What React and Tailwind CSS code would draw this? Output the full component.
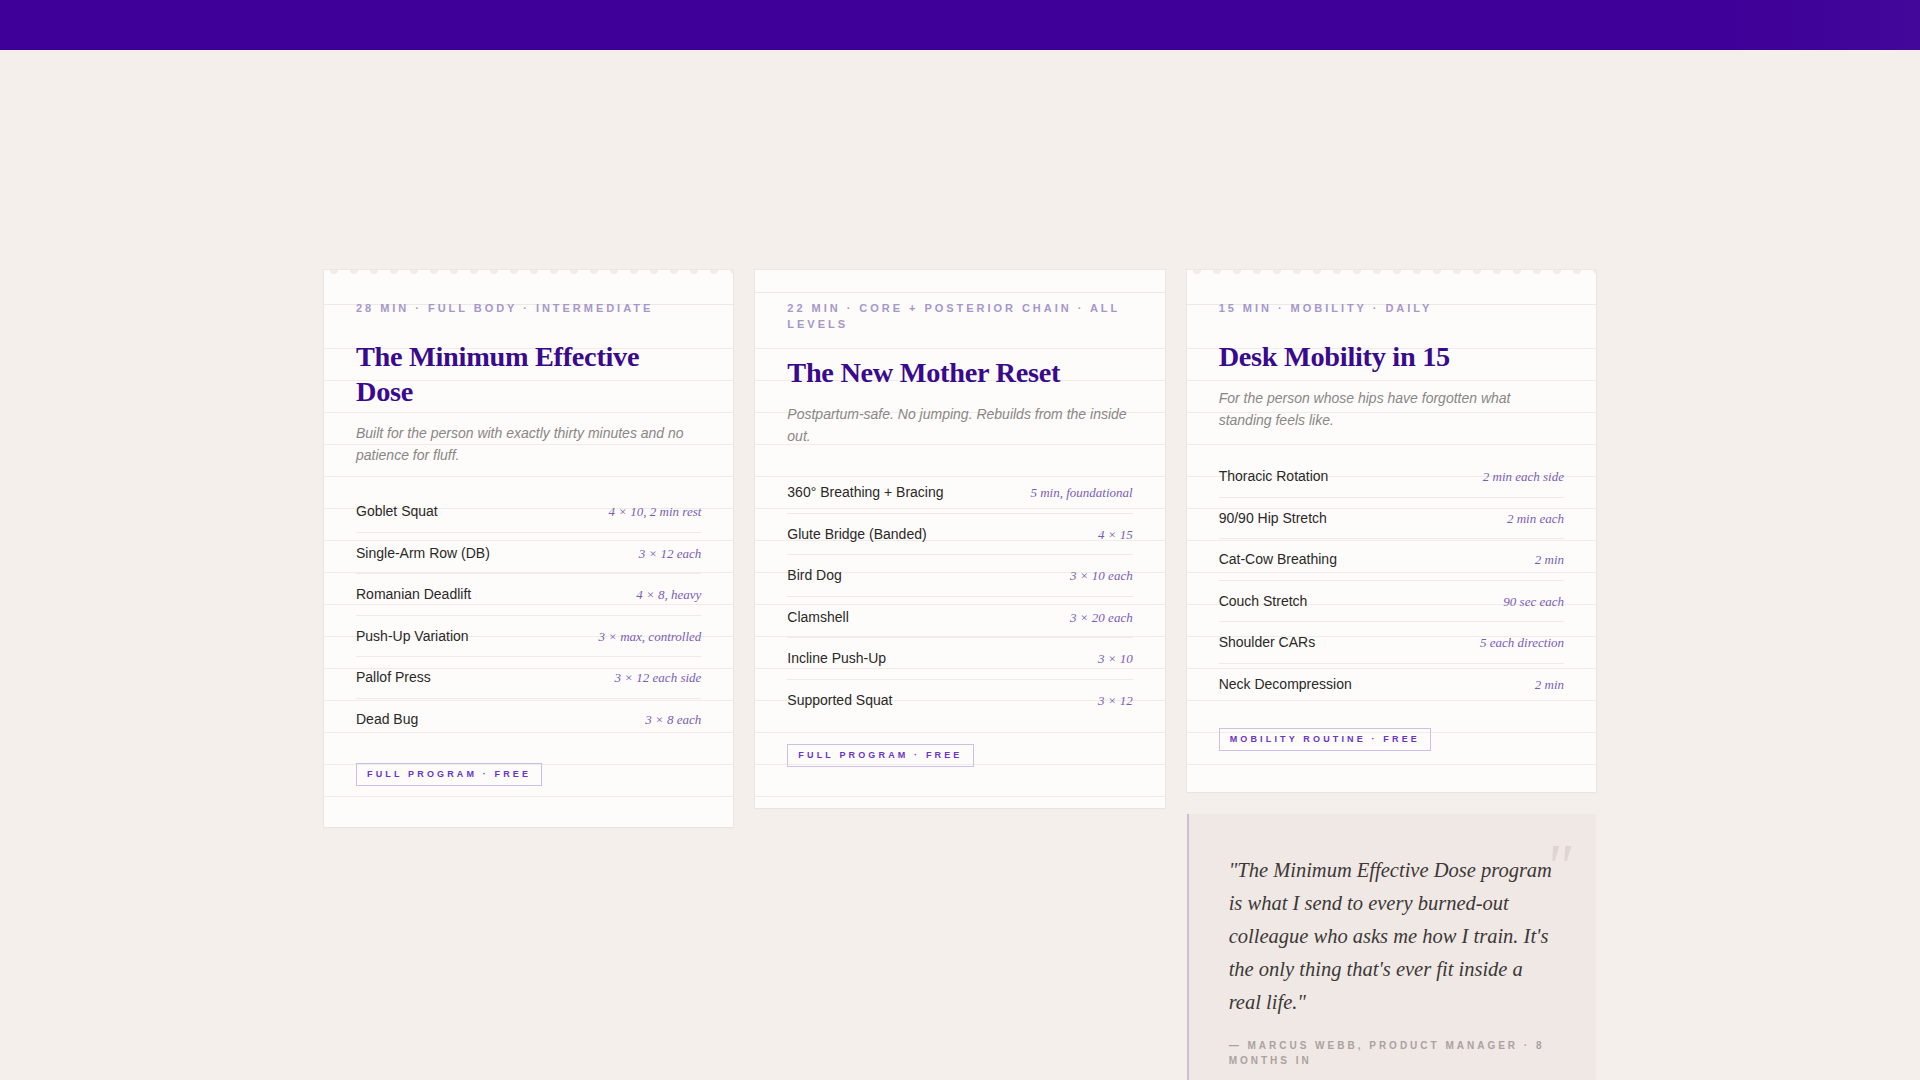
import React from 'react';

const programs = [
  {
    meta: '28 min · Full Body · Intermediate',
    title: 'The Minimum Effective Dose',
    desc: 'Built for the person with exactly thirty minutes and no patience for fluff.',
    wavy: true,
    cta: 'Full Program · Free',
    rows: [
      ['Goblet Squat', '4 × 10, 2 min rest'],
      ['Single-Arm Row (DB)', '3 × 12 each'],
      ['Romanian Deadlift', '4 × 8, heavy'],
      ['Push-Up Variation', '3 × max, controlled'],
      ['Pallof Press', '3 × 12 each side'],
      ['Dead Bug', '3 × 8 each'],
    ],
  },
  {
    meta: '22 min · Core + Posterior Chain · All Levels',
    title: 'The New Mother Reset',
    desc: 'Postpartum-safe. No jumping. Rebuilds from the inside out.',
    wavy: false,
    cta: 'Full Program · Free',
    rows: [
      ['360° Breathing + Bracing', '5 min, foundational'],
      ['Glute Bridge (Banded)', '4 × 15'],
      ['Bird Dog', '3 × 10 each'],
      ['Clamshell', '3 × 20 each'],
      ['Incline Push-Up', '3 × 10'],
      ['Supported Squat', '3 × 12'],
    ],
  },
  {
    meta: '15 min · Mobility · Daily',
    title: 'Desk Mobility in 15',
    desc: 'For the person whose hips have forgotten what standing feels like.',
    wavy: true,
    cta: 'Mobility Routine · Free',
    rows: [
      ['Thoracic Rotation', '2 min each side'],
      ['90/90 Hip Stretch', '2 min each'],
      ['Cat-Cow Breathing', '2 min'],
      ['Couch Stretch', '90 sec each'],
      ['Shoulder CARs', '5 each direction'],
      ['Neck Decompression', '2 min'],
    ],
  },
];

function ProgramCard({ program }) {
  return (
    <div className="relative bg-[#fdfcfa] shadow-[0_0_0_1px_rgba(120,90,80,0.05),0_1px_2px_rgba(120,90,80,0.04)] px-8 pt-[30px] pb-[41px]">
      {/* torn paper edge */}
      {program.wavy && (
        <div className="absolute inset-x-0 top-0 h-[5px] bg-[radial-gradient(circle_at_10px_0,#f2ede9_4px,transparent_4.5px)] bg-size-[20px_5px] bg-repeat-x" />
      )}
      {/* ruled paper lines */}
      <div
        className={`absolute inset-x-0 h-px bg-[#efe9e5] ${program.wavy ? 'top-[34px]' : 'top-[22px]'}`}
      />
      <div className="absolute inset-x-0 top-[47px] bottom-0 bg-[repeating-linear-gradient(to_bottom,transparent_0,transparent_31px,#f1ece8_31px,#f1ece8_32px)]" />

      <div className="relative">
        <p className="font-['Liberation_Sans',Arial,sans-serif] text-[11px] leading-[16px] font-semibold uppercase tracking-[0.27em] text-[#a697c9] mb-[23px]">
          {program.meta}
        </p>
        <h3 className="font-['Liberation_Serif','Times_New_Roman',serif] font-bold text-[28.3px] leading-[35px] tracking-[-0.01em] text-[#3a0a8d] max-w-[320px] mb-[13px]">
          {program.title}
        </h3>
        <p className="font-['Liberation_Sans',Arial,sans-serif] italic text-[14px] leading-[22px] text-[#8b8686] mb-[25px]">
          {program.desc}
        </p>

        <div>
          {program.rows.map(([name, dose]) => (
            <div
              key={name}
              className="flex items-baseline justify-between py-[10px] border-b border-[#f0eae6] last:border-b-0"
            >
              <span className="font-['Liberation_Sans',Arial,sans-serif] text-[14px] leading-[20.3px] text-[#2b2828]">
                {name}
              </span>
              <span className="font-['Liberation_Serif','Times_New_Roman',serif] italic text-[13px] text-[#7b5cb7]">
                {dose}
              </span>
            </div>
          ))}
        </div>

        <div className="mt-6 flex">
          <span className="font-['Liberation_Sans',Arial,sans-serif] border border-[#cdbfe7] px-[10px] text-[9px] leading-[21px] font-bold uppercase tracking-[0.35em] text-[#6a34c8]">
            {program.cta}
          </span>
        </div>
      </div>
    </div>
  );
}

function Testimonial() {
  return (
    <div className="relative bg-[#f0e8e4] border-l-2 border-[#cbbfd8] pl-10 pr-9 pt-10 pb-10">
      <span className="absolute top-[21px] right-[25px] font-['Liberation_Serif',serif] italic text-[64px] leading-none text-[#dfd5d2] select-none">
        "
      </span>
      <p className="relative font-['Liberation_Serif','Times_New_Roman',serif] italic text-[20.5px] leading-[33px] text-[#3b3838]">
        "The Minimum Effective Dose program is what I send to every burned-out colleague who asks me how I train. It's the only thing that's ever fit inside a real life."
      </p>
      <p className="mt-5 font-['Liberation_Sans',Arial,sans-serif] text-[10px] leading-[14.5px] font-bold uppercase tracking-[0.3em] text-[#aaa2a0]">
        — Marcus Webb, Product Manager · 8 months in
      </p>
    </div>
  );
}

export default function App() {
  return (
    <div className="min-h-screen bg-[#f4efeb]">
      <header className="h-[50px] bg-[linear-gradient(to_right,#3e0098_90%,#43079a)]" />

      <main className="pt-[220px] pb-16">
        <div className="w-[1272px] mx-auto grid grid-cols-3 gap-[22px] items-start">
          <ProgramCard program={programs[0]} />
          <ProgramCard program={programs[1]} />
          <div className="flex flex-col gap-[22px]">
            <ProgramCard program={programs[2]} />
            <Testimonial />
          </div>
        </div>
      </main>
    </div>
  );
}
